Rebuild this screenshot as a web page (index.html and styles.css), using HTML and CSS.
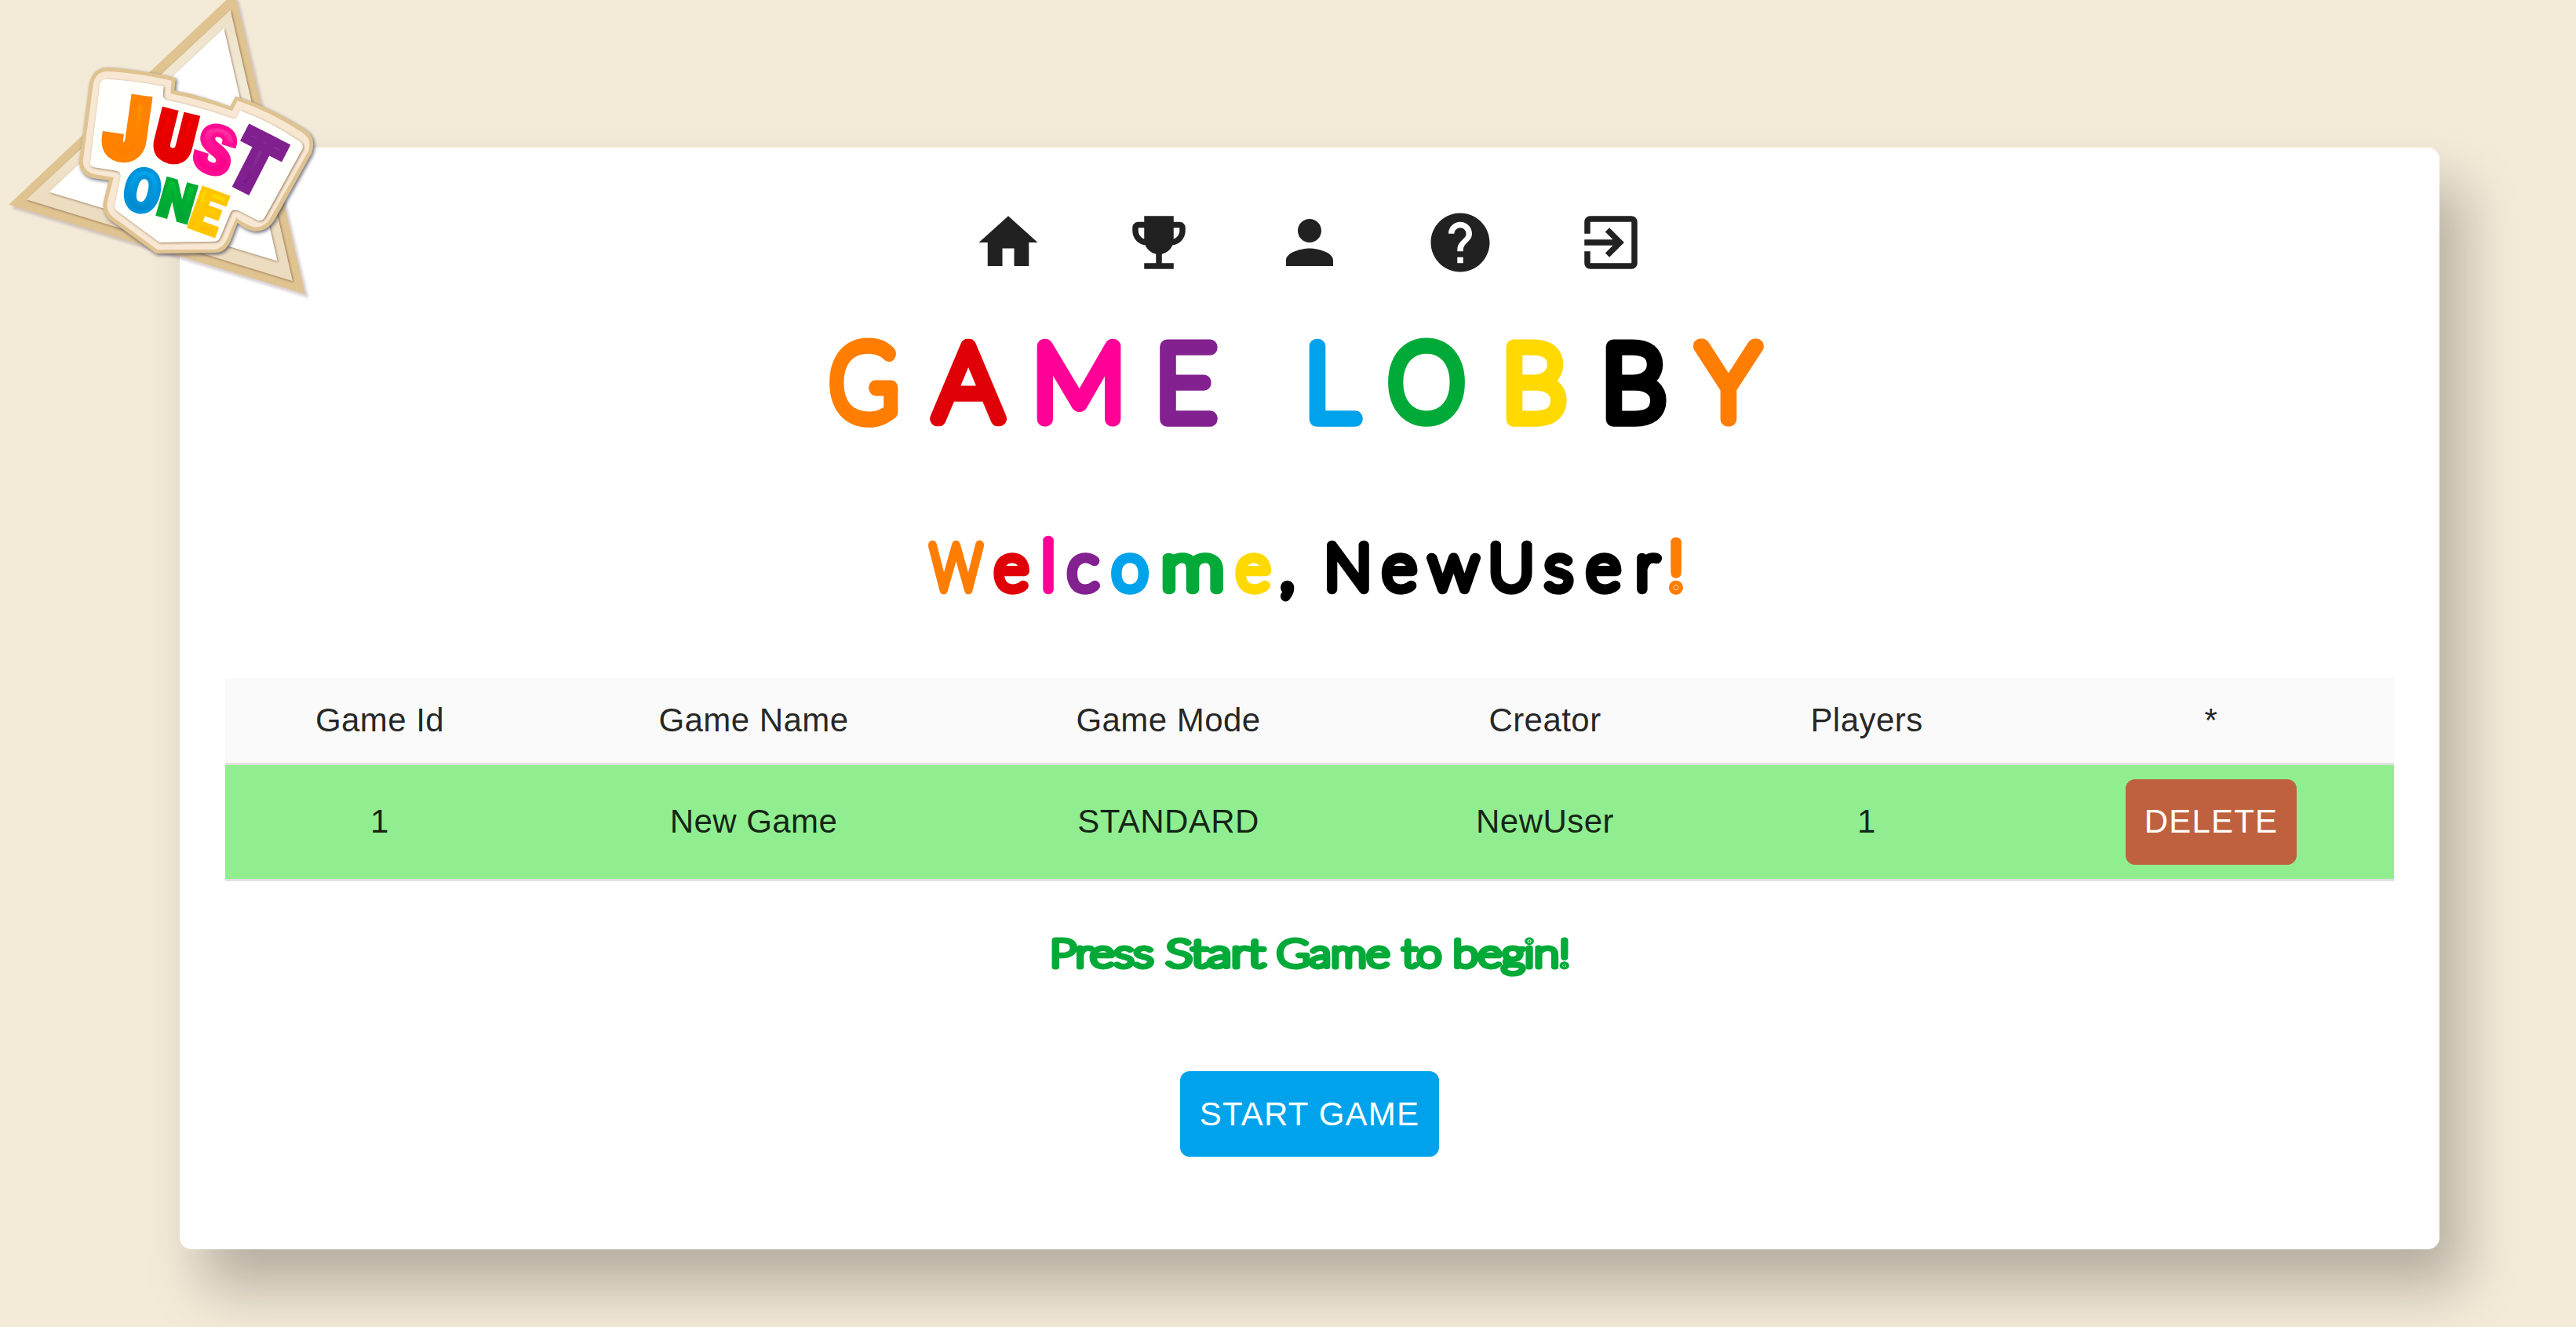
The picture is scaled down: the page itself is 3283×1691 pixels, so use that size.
FILE: index.html
```html
<!DOCTYPE html>
<html lang="en">
<head>
<meta charset="utf-8">
<title>Just One - Game Lobby</title>
<link rel="stylesheet" href="styles.css">
</head>
<body>
<main class="card">
  <nav class="nav">
    <svg class="icon" viewBox="0 0 24 24"><path d="M10 20v-6h4v6h5v-8h3L12 3 2 12h3v8z"/></svg>
    <svg class="icon" viewBox="0 0 24 24"><path d="M19 5h-2V3H7v2H5c-1.1 0-2 .9-2 2v1c0 2.55 1.92 4.63 4.39 4.94.63 1.5 1.98 2.63 3.61 2.96V19H7v2h10v-2h-4v-3.1c1.63-.33 2.98-1.46 3.61-2.96C19.08 12.63 21 10.55 21 8V7c0-1.1-.9-2-2-2zM5 8V7h2v3.82C5.84 10.4 5 9.3 5 8zm14 0c0 1.3-.84 2.4-2 2.82V7h2v1z"/></svg>
    <svg class="icon" viewBox="0 0 24 24"><path d="M12 12c2.21 0 4-1.79 4-4s-1.79-4-4-4-4 1.79-4 4 1.79 4 4 4zm0 2c-2.67 0-8 1.34-8 4v2h16v-2c0-2.66-5.33-4-8-4z"/></svg>
    <svg class="icon" viewBox="0 0 24 24"><path d="M12 2C6.48 2 2 6.48 2 12s4.48 10 10 10 10-4.48 10-10S17.52 2 12 2zm1 17h-2v-2h2v2zm2.07-7.75l-.9.92C13.45 12.9 13 13.5 13 15h-2v-.5c0-1.1.45-2.1 1.17-2.83l1.24-1.26c.37-.36.59-.86.59-1.41 0-1.1-.9-2-2-2s-2 .9-2 2H8c0-2.21 1.79-4 4-4s4 1.79 4 4c0 .88-.36 1.68-.93 2.25z"/></svg>
    <svg class="icon" viewBox="0 0 24 24"><path d="M10.09 15.59L11.5 17l5-5-5-5-1.41 1.41L12.67 11H3v2h9.67l-2.58 2.59zM19 3H5c-1.11 0-2 .9-2 2v4h2V5h14v14H5v-4H3v4c0 1.1.89 2 2 2h14c1.1 0 2-.9 2-2V5c0-1.1-.9-2-2-2z"/></svg>
  </nav>

  <h1 class="heading">
    <svg class="art" viewBox="287 354 2764 236"><text class="art-text title" y="534"><tspan class="orange" x="1101" textLength="87" lengthAdjust="spacingAndGlyphs">G</tspan><tspan class="red" x="1234">A</tspan><tspan class="pink" x="1375">M</tspan><tspan class="purple" x="1530">E</tspan> <tspan class="blue" x="1696">L</tspan><tspan class="green" x="1818" textLength="97" lengthAdjust="spacingAndGlyphs">O</tspan><tspan class="yellow" x="1955">B</tspan><tspan class="black" x="2082">B</tspan><tspan class="orange" x="2203">Y</tspan></text></svg>
  </h1>
  <h2 class="heading">
    <svg class="art" viewBox="287 590 2764 274"><text class="art-text welcome" y="751"><tspan class="orange" x="1218.5" textLength="65" lengthAdjust="spacingAndGlyphs">W</tspan><tspan class="small red" x="1289">e</tspan><tspan class="tall pink" x="1336">l</tspan><tspan class="small purple" x="1380">c</tspan><tspan class="small blue" x="1440">o</tspan><tspan class="small green" x="1520" textLength="80" lengthAdjust="spacingAndGlyphs">m</tspan><tspan class="small yellow" x="1597">e</tspan><tspan class="black" x="1652">,</tspan> <tspan class="black" x="1718">N</tspan><tspan class="small black" x="1783.5">e</tspan><tspan class="small black" x="1852.5">w</tspan><tspan class="black" x="1926">U</tspan><tspan class="small black" x="1986.5">s</tspan><tspan class="small black" x="2043.5">e</tspan><tspan class="small black" x="2099">r</tspan><tspan class="tall orange" x="2136">!</tspan></text></svg>
  </h2>

  <table class="games">
    <colgroup><col class="c-id"><col class="c-name"><col class="c-mode"><col class="c-creator"><col class="c-players"><col class="c-action"></colgroup>
    <thead>
      <tr><th>Game Id</th><th>Game Name</th><th>Game Mode</th><th>Creator</th><th>Players</th><th>*</th></tr>
    </thead>
    <tbody>
      <tr><td>1</td><td>New Game</td><td>STANDARD</td><td>NewUser</td><td>1</td><td><button class="btn btn-delete">DELETE</button></td></tr>
    </tbody>
  </table>

  <p class="heading">
    <svg class="art" viewBox="287 1123 2764 242"><text class="art-text hint green" y="1231.5"><tspan x="1338" textLength="132" lengthAdjust="spacingAndGlyphs">Press</tspan> <tspan x="1486" textLength="126" lengthAdjust="spacingAndGlyphs">Start</tspan> <tspan x="1627" textLength="144" lengthAdjust="spacingAndGlyphs">Game</tspan> <tspan x="1787" textLength="50" lengthAdjust="spacingAndGlyphs">to</tspan> <tspan x="1852" textLength="149" lengthAdjust="spacingAndGlyphs">begin!</tspan></text></svg>
  </p>
  <button class="btn btn-start">START GAME</button>
</main>

<svg class="logo" viewBox="0 0 1260 1200">
  <defs>
    <linearGradient id="g-j" x2="0" y2="1"><stop offset=".2" stop-color="#ff9500"/><stop offset=".9" stop-color="#ff7300"/></linearGradient>
    <linearGradient id="g-u" x2="0" y2="1"><stop offset=".2" stop-color="#ff0000"/><stop offset=".9" stop-color="#d80000"/></linearGradient>
    <linearGradient id="g-s" x2="0" y2="1"><stop offset=".2" stop-color="#ff32a4"/><stop offset=".6" stop-color="#ff008c"/></linearGradient>
    <linearGradient id="g-t" x2="0" y2="1"><stop offset=".2" stop-color="#8f3a9e"/><stop offset=".9" stop-color="#750a82"/></linearGradient>
    <linearGradient id="g-o" x2="0" y2="1"><stop offset=".2" stop-color="#00a6ee"/><stop offset=".9" stop-color="#0080c4"/></linearGradient>
    <linearGradient id="g-n" x2="0" y2="1"><stop offset=".2" stop-color="#00c030"/><stop offset=".9" stop-color="#009838"/></linearGradient>
    <linearGradient id="g-e" x2="0" y2="1"><stop offset=".2" stop-color="#ffdc00"/><stop offset=".9" stop-color="#ffb400"/></linearGradient>
    <linearGradient id="g-frame" x2="0" y2="1"><stop offset="0" stop-color="#eee0c6"/><stop offset=".35" stop-color="#f3ecd9"/><stop offset=".7" stop-color="#ecdcc0"/></linearGradient>
    <filter id="soft" color-interpolation-filters="sRGB" x="-10%" y="-10%" width="120%" height="120%"><feDropShadow dx="5" dy="6" stdDeviation="6" flood-color="#3c3c50" flood-opacity=".75"/></filter>
    <filter id="outer" color-interpolation-filters="sRGB" x="-10%" y="-10%" width="120%" height="120%"><feDropShadow dx="12" dy="14" stdDeviation="4" flood-color="#a08c96" flood-opacity=".4"/></filter>
    <filter id="inset" color-interpolation-filters="sRGB" x="-10%" y="-10%" width="120%" height="120%"><feDropShadow dx="3" dy="3" stdDeviation="4" flood-color="#6e4628" flood-opacity=".65"/></filter>
  </defs>
  <path filter="url(#outer)" fill="#dfc391" d="M888-22L902-8 1168 1125 34 782z"/>
  <path filter="url(#inset)" fill="url(#g-frame)" d="M881 38L1119 1075 101 763z"/>
  <path filter="url(#inset)" fill="#fff" d="M856 108L1061 998 188 734z"/>
  <path filter="url(#soft)" fill="#dfc391" d="M405 258Q500 260 672 297L667 346Q780 368 880 408L900 368Q1030 408 1165 494Q1212 525 1192 585L1050 840Q1020 888 970 884Q940 880 908 852L880 925Q860 966 825 966L597 970 420 840Q388 810 396 770L416 690 360 682Q298 668 304 610L342 320Q354 262 405 258z"/>
  <path fill="#f8e7d2" d="M405 273Q500 275 656 308L652 358Q780 384 888 424L908 385Q1030 425 1155 506Q1194 532 1180 575L1035 832Q1010 874 970 868Q935 858 903 832L868 915Q850 952 818 954L602 955 430 828Q404 805 411 770L434 678 365 667Q314 655 318 610L356 325Q364 276 405 273z"/>
  <path filter="url(#inset)" fill="#fffffb" d="M405 302Q500 306 626 330L623 365Q626 380 645 384Q770 410 890 453Q903 455 907 445L918 422Q1040 466 1148 542Q1162 552 1156 570L1012 832Q1004 846 985 842L910 804Q890 798 882 812L842 908Q836 921 822 923L610 927 446 806Q434 796 439 782L461 675Q462 657 445 653L360 640Q342 636 345 620L382 320Q386 304 405 302z"/>
  <g class="logo-text">
    <text fill="url(#g-j)" stroke="#ff8200" transform="translate(486 489) rotate(8) scale(2.8 3.15)" y="35.5">J</text>
    <text fill="url(#g-u)" stroke="#e60000" transform="translate(669 524) rotate(14) scale(2.2 2.45)" y="35.5">U</text>
    <text class="thin" fill="url(#g-s)" stroke="#ff0c92" transform="translate(822 572) rotate(18) scale(2.35 2.5)" y="35.5">S</text>
    <text fill="url(#g-t)" stroke="#80208f" transform="translate(976 622) rotate(27) scale(2.5 2.95)" y="35.5">T</text>
    <text class="thin" fill="url(#g-o)" stroke="#0092d8" transform="translate(545 728) rotate(13) scale(2 2.25)" y="35.5">O</text>
    <text class="thin" fill="url(#g-n)" stroke="#00ab34" transform="translate(677 767) rotate(16) scale(1.9 2)" y="35.5">N</text>
    <text class="thin" fill="url(#g-e)" stroke="#ffc600" transform="translate(794 809) rotate(20) scale(2.05 2.2)" y="35.5">E</text>
  </g>
</svg>
</body>
</html>
```
FILE: styles.css
```css
* { box-sizing: border-box; }

body {
  margin: 0;
  height: 1691px;
  overflow: hidden;
  position: relative;
  padding: 188px 174px 99px 229px;
  background: #f3ead8;
  font-family: "Liberation Sans", Arial, sans-serif;
  color: rgba(0, 0, 0, 0.87);
}

.card {
  display: flex;
  flex-direction: column;
  align-items: center;
  height: 1404px;
  padding: 76px 58px 0;
  background: #fff;
  border-radius: 15px;
  box-shadow: 30px 48px 70px rgba(0, 0, 0, 0.25);
}

.nav {
  display: flex;
  gap: 102px;
}

.icon {
  display: block;
  width: 90px;
  height: 90px;
  fill: #212121;
}

.heading {
  width: 100%;
  margin: 0;
}

.art {
  display: block;
  width: 100%;
}

.art-text {
  font-family: Lato, sans-serif;
  font-weight: 100;
  stroke: currentColor;
  fill: currentColor;
  stroke-linejoin: round;
  stroke-linecap: round;
  paint-order: stroke;
}

.art-text tspan {
  fill: currentColor;
  stroke: currentColor;
}

.title {
  font-size: 133px;
  stroke-width: 19px;
  text-anchor: middle;
}

.welcome {
  font-size: 80px;
  stroke-width: 12.5px;
  text-anchor: middle;
}

.welcome .small { font-size: 83px; }
.welcome .tall { font-size: 87px; }

.hint {
  font-size: 48px;
  stroke-width: 7px;
}

.orange { color: #ff7d00; }
.red { color: #e00008; }
.pink { color: #ff0096; }
.purple { color: #82218f; }
.blue { color: #00a3eb; }
.green { color: #00aa38; }
.yellow { color: #ffd900; }
.black { color: #000; }

.games {
  width: 100%;
  table-layout: fixed;
  border-collapse: separate;
  border-spacing: 0;
  font-size: 42px;
  letter-spacing: 0.01071em;
  text-align: center;
}

.c-id { width: 394px; }
.c-name { width: 559px; }
.c-mode { width: 498px; }
.c-creator { width: 462px; }
.c-players { width: 358px; }

.games th,
.games td {
  padding: 0;
  border-bottom: 3px solid #e0e0e0;
  font-weight: 400;
  line-height: 60px;
}

.games th {
  height: 111px;
  padding-bottom: 1px;
  background: #fafafa;
}

.games td {
  height: 148px;
  padding-bottom: 1px;
  background: #90ee90;
}

.games th:last-child,
.games td:last-child {
  padding-left: 27px;
}

.btn {
  display: block;
  height: 109px;
  padding: 0;
  border: 0;
  border-radius: 12px;
  color: #fff;
  font: 400 42px/73.5px "Liberation Sans", Arial, sans-serif;
  letter-spacing: 0.02857em;
}

.btn-delete {
  width: 218px;
  margin: 0 auto;
  background: #bf613e;
}

.btn-start {
  width: 330px;
  background: #00a3eb;
}

.logo {
  position: absolute;
  left: 0;
  top: 0;
  width: 420px;
  height: 400px;
}

.logo-text text {
  font-family: Roboto, sans-serif;
  font-size: 100px;
  font-weight: 900;
  text-anchor: middle;
  stroke-width: 12px;
}

.logo-text .thin { stroke-width: 7px; }
```
